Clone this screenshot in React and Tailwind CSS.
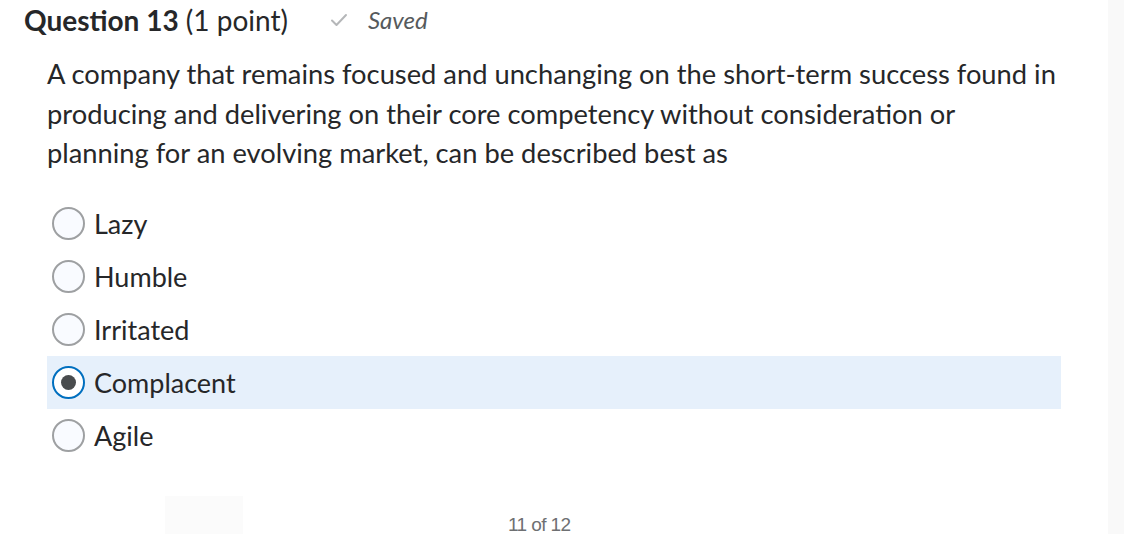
import { useState } from 'react';

const options = ['Lazy', 'Humble', 'Irritated', 'Complacent', 'Agile'];

function Radio({ checked }) {
  if (checked) {
    return (
      <span className="flex h-[33px] w-[33px] shrink-0 items-center justify-center rounded-full border-2 border-[#006fbf] bg-white">
        <span className="h-[15px] w-[15px] rounded-full bg-[#494c4e]" />
      </span>
    );
  }
  return <span className="h-[33px] w-[33px] shrink-0 rounded-full border-2 border-[#9ea0a2] bg-[#f9fbff]" />;
}

export default function App() {
  const [selected, setSelected] = useState('Complacent');

  return (
    <div className="relative h-[534px] w-[1124px] overflow-hidden bg-white font-['Lato',sans-serif] text-[#262729]">
      <div className="absolute inset-y-0 right-0 w-[16px] bg-[#f9f9f9]" />
      <div className="flex items-center pl-[24px] pt-[2px]">
        <h2 className="text-[28px] leading-[34px]">
          <span className="font-bold">Question 13</span> (1 point)
        </h2>
        <svg className="ml-[42px]" width="18" height="14" viewBox="0 0 18 14" fill="none">
          <path d="M2 7.5 L6.5 12 L16 2" stroke="#b5b7b9" strokeWidth="2" strokeLinecap="round" strokeLinejoin="round" />
        </svg>
        <span className="ml-[20px] text-[24px] italic text-[#565a5c]">Saved</span>
      </div>

      <p className="mt-[16px] whitespace-nowrap pl-[47px] text-[27.3px] leading-[39.5px]">
        A company that remains focused and unchanging on the short-term success found in
        <br />
        producing and delivering on their core competency without consideration or
        <br />
        planning for an evolving market, can be described best as
      </p>

      <div className="mt-[24px] flex w-[1061px] flex-col pl-[47px]">
        {options.map((opt) => (
          <label
            key={opt}
            onClick={() => setSelected(opt)}
            className={`flex h-[53px] cursor-pointer items-center gap-[9px] pl-[5px] ${
              selected === opt ? 'bg-[#e6f0fb]' : ''
            }`}
          >
            <Radio checked={selected === opt} />
            <span className="text-[27px] leading-none">{opt}</span>
          </label>
        ))}
      </div>

      <div className="absolute left-[165px] top-[496px] h-[40px] w-[78px] bg-[#fbfbfb]" />
      <div className="absolute left-[508px] top-[513px] text-[19px] leading-[24px] text-[#6e7072] font-['Liberation_Sans',sans-serif] tracking-[-0.6px]">
        11 of 12
      </div>
    </div>
  );
}
